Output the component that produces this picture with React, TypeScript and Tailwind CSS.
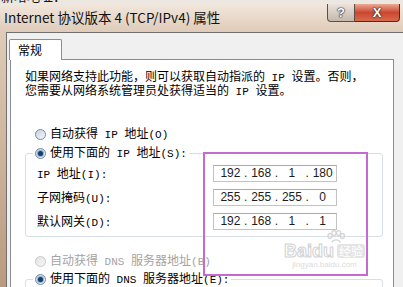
import type { ReactNode } from 'react';

function M({ children }: { children: ReactNode }) {
    return <span className="font-['Liberation_Mono',monospace] text-[11px] whitespace-pre">{children}</span>;
}

function Radio({ checked, disabled }: { checked?: boolean; disabled?: boolean }) {
    if (disabled) {
        return <div className="w-[11px] h-[11px] shrink-0 rounded-full border border-[#c9c9c9] bg-gradient-to-br from-[#e2e2e2] to-[#f7f7f7]" />;
    }
    return (
        <div className="w-[11px] h-[11px] shrink-0 rounded-full border border-[#7d8894] bg-gradient-to-br from-[#c5d3e1] to-[#f5f8fb] flex items-center justify-center">
            {checked && <div className="w-[5px] h-[5px] rounded-full bg-[#163f6c] shadow-[0_0_0_1px_#7fb0dc]" />}
        </div>
    );
}

function IpBox({ parts }: { parts: string[] }) {
    return (
        <div className="w-[124px] h-[17px] border border-[#c3c3c3] border-t-[#a9a9a9] bg-white flex items-center pl-[3px] font-['Liberation_Sans',sans-serif] text-[12px] leading-[15px] text-[#1c1c1c]">
            <span className="w-[27px] text-center">{parts[0]}</span>
            <span className="w-[4px] text-center">.</span>
            <span className="w-[27px] text-center">{parts[1]}</span>
            <span className="w-[4px] text-center">.</span>
            <span className="w-[27px] text-center">{parts[2]}</span>
            <span className="w-[4px] text-center">.</span>
            <span className="w-[27px] text-center">{parts[3]}</span>
        </div>
    );
}

function Row({ label, parts }: { label: ReactNode; parts: string[] }) {
    return (
        <div className="flex items-center h-[17px]">
            <div className="w-[187px] pl-[11px] text-[12px] leading-[16px]">{label}</div>
            <IpBox parts={parts} />
        </div>
    );
}

export default function App() {
    return (
        <div className="relative w-[403px] h-[287px] overflow-hidden flex flex-col bg-[#e4d3c2] font-['Noto_Sans_CJK_SC',sans-serif] text-black">
            {/* edge of the window behind */}
            <div className="h-[4px] shrink-0 overflow-hidden bg-[#ece7e1]">
                <div className="-mt-[11px] pl-[1px] text-[13px] leading-[14px] text-[#111]">新增地址：</div>
            </div>

            {/* Title bar */}
            <div className="h-[28px] shrink-0 flex bg-gradient-to-b from-[#f1e7dd] to-[#dfcbb8]">
                <div className="pl-[4px] pt-[5px] text-[13.5px] leading-[16px] text-[#111]">Internet 协议版本 4 (TCP/IPv4) 属性</div>
                <div className="ml-auto mr-[3px] flex h-[18px]">
                    <div className="w-[28px] h-[18px] rounded-bl-[4px] border border-t-0 border-[#5d4f45] bg-gradient-to-b from-[#ece3dc] to-[#c5b8ad] flex items-center justify-center text-white font-bold text-[13px] font-['Liberation_Sans',sans-serif] [text-shadow:0_0_1px_#222,0_0_1px_#222,0_0_2px_#333]">?</div>
                    <div className="w-[45px] h-[18px] rounded-br-[4px] border border-l-0 border-t-0 border-[#5a261c] bg-gradient-to-b from-[#eaa893] via-[#c9472f] to-[#d86a4e] flex items-center justify-center text-white font-bold text-[13px] font-['Liberation_Sans',sans-serif] [text-shadow:0_0_1px_#222,0_0_1px_#222,0_0_2px_#333]">X</div>
                </div>
            </div>

            {/* Body */}
            <div className="flex-1 flex min-h-0">
                <div className="w-[6px] shrink-0 bg-gradient-to-b from-[#dfcbb7] to-[#b89a7f]" />
                <div className="flex-1 bg-[#f0f0f0] border-l border-t border-[#707070] pt-[6px] pl-[2px]">
                    <div className="relative z-10 -mb-px w-[53px] h-[21px] bg-white border border-b-0 border-[#898c95] rounded-t-[2px] pl-[8px] pt-[2px] text-[12px] leading-[16px]">常规</div>
                    <div className="ml-[1px] w-[384px] h-[260px] bg-white border border-[#898c95]">
                        <div className="pl-[14px] pt-[10px] text-[12px] leading-[12px]">
                            <div>如果网络支持此功能，则可以获取自动指派的<M> IP </M>设置。否则，</div>
                            <div>您需要从网络系统管理员处获得适当的<M> IP </M>设置。</div>
                        </div>

                        <div className="mt-[28px] pl-[24px] flex items-center h-[16px] gap-[4px] text-[12px]">
                            <Radio />
                            <span>自动获得<M> IP </M>地址<M>(O)</M></span>
                        </div>

                        <fieldset className="mt-[3px] ml-[14px] w-[358px] border border-[#d5dfe5] rounded-[3px]">
                            <legend className="ml-[7px] px-[2px]">
                                <div className="flex items-center h-[16px] gap-[4px] text-[12px]">
                                    <Radio checked />
                                    <span>使用下面的<M> IP </M>地址<M>(S):</M></span>
                                </div>
                            </legend>
                            <div className="flex flex-col gap-[7px] pt-[4px] pb-[6px]">
                                <Row label={<><M>IP </M>地址<M>(I):</M></>} parts={['192', '168', '1', '180']} />
                                <Row label={<>子网掩码<M>(U):</M></>} parts={['255', '255', '255', '0']} />
                                <Row label={<>默认网关<M>(D):</M></>} parts={['192', '168', '1', '1']} />
                            </div>
                        </fieldset>

                        <div className="mt-[16px] pl-[24px] flex items-center h-[16px] gap-[4px] text-[12px] text-[#a3a3a3]">
                            <Radio disabled />
                            <span>自动获得<M> DNS </M>服务器地址<M>(B)</M></span>
                        </div>

                        <fieldset className="mt-[2px] ml-[14px] w-[358px] h-[70px] border border-[#d5dfe5] rounded-[3px]">
                            <legend className="ml-[7px] px-[2px]">
                                <div className="flex items-center h-[16px] gap-[4px] text-[12px]">
                                    <Radio checked />
                                    <span>使用下面的<M> DNS </M>服务器地址<M>(E):</M></span>
                                </div>
                            </legend>
                        </fieldset>
                    </div>
                </div>
            </div>

            {/* Baidu watermark */}
            <div className="absolute left-[284px] top-[230px] flex flex-col items-center text-[#d6d6d6]">
                <svg width="20" height="14" viewBox="0 0 20 14" className="ml-[22px]">
                    <g fill="none" stroke="#d6d6d6" strokeWidth="1.3">
                        <ellipse cx="4" cy="6" rx="2" ry="2.5" />
                        <ellipse cx="8" cy="3" rx="2" ry="2.5" />
                        <ellipse cx="12.5" cy="3" rx="2" ry="2.5" />
                        <ellipse cx="16.5" cy="6" rx="2" ry="2.5" />
                        <path d="M6 12.5 C7 9, 13 9, 14.5 12.5" />
                    </g>
                </svg>
                <div className="flex items-center gap-[3px] -mt-[2px]">
                    <span className="font-['Liberation_Sans',sans-serif] font-bold text-[18px] leading-[18px] text-white [-webkit-text-stroke:1px_#d2d2d2]">Baidu</span>
                    <span className="px-[2px] rounded-[3px] bg-[#e4e4e4] text-white text-[12px] leading-[14px]">经验</span>
                </div>
                <div className="font-['Liberation_Sans',sans-serif] text-[8px] leading-[10px] text-[#dcdcdc]">jingyan.baidu.com</div>
            </div>

            {/* annotation rectangle */}
            <div className="absolute left-[203px] top-[152px] w-[165px] h-[124px] border-2 border-[#c46ad0]" />
        </div>
    );
}
